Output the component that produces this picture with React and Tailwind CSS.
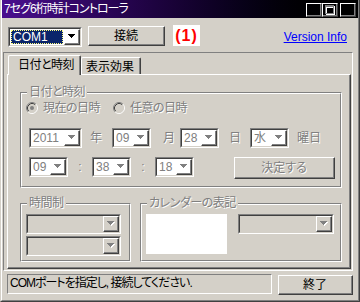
import React from 'react';

const dis = "text-[#808080] [text-shadow:1px_1px_0_#ffffff]";

function Raised({ className = "", children }) {
  return (
    <div className={`shrink-0 border border-t-white border-l-white border-r-[#404040] border-b-[#404040] ${className}`}>
      <div className="w-full h-full border-r border-b border-r-[#808080] border-b-[#808080] flex items-center justify-center">
        {children}
      </div>
    </div>
  );
}

function Arrow({ disabled }) {
  return (
    <svg width="8" height="5" viewBox="0 0 8 5" shapeRendering="crispEdges">
      {disabled && <path d="M1 1h7v1H1zM2 2h5v1H2zM3 3h3v1H3zM4 4h1v1H4z" fill="#ffffff" />}
      <path d="M0 0h7v1H0zM1 1h5v1H1zM2 2h3v1H2zM3 3h1v1H3z" fill={disabled ? "#808080" : "#000000"} />
    </svg>
  );
}

function Combo({ w, value, selected, bg = "bg-white", disabled = true }) {
  return (
    <div className={`${w} h-[20px] shrink-0 border border-t-[#808080] border-l-[#808080] border-r-white border-b-white`}>
      <div className={`h-full flex border border-t-[#404040] border-l-[#404040] border-r-[#d4d0c8] border-b-[#d4d0c8] ${bg}`}>
        <div className="flex-1 min-w-0 flex">
          {selected ? (
            <div className="flex-1 m-[1px] bg-[#0a246a] border border-dotted border-[#ffff80] text-white pl-px leading-[12px]">
              {value}
            </div>
          ) : (
            <span className={`pl-[2px] leading-[16px] ${dis}`}>{value}</span>
          )}
        </div>
        <Raised className="w-[16px] h-full">
          <Arrow disabled={disabled} />
        </Raised>
      </div>
    </div>
  );
}

function Group({ label, className = "", children }) {
  return (
    <div className={`relative shrink-0 border border-t-[#808080] border-l-[#808080] border-r-white border-b-white ${className}`}>
      <div className="w-full h-full border border-t-white border-l-white border-r-[#808080] border-b-[#808080]">
        {children}
      </div>
      <span className={`absolute left-[6px] top-[-8px] px-[2px] bg-[#d4d0c8] leading-[14px] tracking-[-0.5px] ${dis}`}>{label}</span>
    </div>
  );
}

function Radio({ checked }) {
  return (
    <svg width="12" height="12" viewBox="0 0 12 12" className="shrink-0">
      <circle cx="6" cy="6" r="4" fill="#d4d0c8" />
      <path d="M2.11 9.89A5.5 5.5 0 0 1 9.89 2.11" stroke="#808080" fill="none" />
      <path d="M9.89 2.11A5.5 5.5 0 0 1 2.11 9.89" stroke="#ffffff" fill="none" />
      <path d="M2.82 9.18A4.5 4.5 0 0 1 9.18 2.82" stroke="#404040" fill="none" />
      <path d="M9.18 2.82A4.5 4.5 0 0 1 2.82 9.18" stroke="#d4d0c8" fill="none" />
      {checked && <circle cx="6" cy="6" r="2" fill="#808080" />}
    </svg>
  );
}

function TitleBtn({ kind, className = "" }) {
  return (
    <Raised className={`w-[16px] h-[14px] ${className}`}>
      <svg width="13" height="11" viewBox="0 0 13 11" shapeRendering="crispEdges">
        {kind === "min" && <path d="M2 8h6v2H2z" fill="#000000" />}
        {kind === "max" && (
          <>
            <path d="M3 2h9v2H3zM3 4h1v6H3zM11 4h1v6h-1zM3 10h9v1H3z" fill="#ffffff" />
            <path d="M2 1h9v2H2zM2 3h1v6H2zM10 3h1v6h-1zM2 9h9v1H2z" fill="#808080" />
          </>
        )}
        {kind === "close" && (
          <path
            d="M2 1h2v1H2zM8 1h2v1H8zM3 2h2v1H3zM7 2h2v1H7zM4 3h4v1H4zM5 4h2v1H5zM4 5h4v1H4zM3 6h2v1H3zM7 6h2v1H7zM2 7h2v1H2zM8 7h2v1H8z"
            fill="#000000"
          />
        )}
      </svg>
    </Raised>
  );
}

export default function App() {
  return (
    <div className="w-[360px] h-[302px] bg-[#d4d0c8] border-l border-r border-b border-l-[#d4d0c8] border-r-[#404040] border-b-[#404040] text-[12px] leading-[14px] text-black font-['Liberation_Sans','Noto_Sans_CJK_JP',sans-serif] [font-feature-settings:'palt'] overflow-hidden">
      <div className="h-full flex flex-col border-l border-r border-b border-l-white border-r-[#808080] border-b-[#808080]">
        {/* title bar */}
        <div className="h-[18px] shrink-0 flex items-start bg-linear-to-r from-[#4a0f8f] to-black">
          <span className="pl-[2px] pt-[2px] text-white tracking-[-1px]">7セグ6桁時計コントローラ</span>
          <div className="ml-auto mt-[3px] mr-[2px] flex">
            <TitleBtn kind="min" />
            <TitleBtn kind="max" />
            <TitleBtn kind="close" className="ml-[2px]" />
          </div>
        </div>

        {/* port row */}
        <div className="flex items-start mt-[8px] h-[20px] shrink-0">
          <div className="ml-[6px] mt-px">
            <Combo w="w-[74px]" value="COM1" selected disabled={false} />
          </div>
          <Raised className="ml-[6px] w-[77px] h-[20px]">接続</Raised>
          <div className="ml-[8px] -mt-px w-[27px] h-[21px] bg-white flex items-center justify-center text-[16px] font-bold text-[#ff0000] leading-none tracking-[1px]">
            (1)
          </div>
          <a className="ml-auto mr-[11px] mt-[4px] text-[#0000ff] underline">Version Info</a>
        </div>

        {/* tab frame */}
        <div className="ml-px mt-[6px] w-[350px] h-[219px] shrink-0 border border-t-[#808080] border-l-[#808080] border-r-white border-b-white pt-[2px] pl-[3px]">
          <div className="flex items-end h-[19px] pl-px">
            <div className="relative z-10 -mb-px w-[73px] h-[20px] bg-[#d4d0c8] border-t border-l border-r border-t-white border-l-white border-r-[#404040] rounded-t-[2px]">
              <div className="h-full border-r border-r-[#808080] pl-[9px] pt-[2px] tracking-[-0.5px]">日付と時刻</div>
            </div>
            <div className="w-[60px] h-[17px] border-t border-l border-r border-t-white border-l-white border-r-[#404040] rounded-t-[2px]">
              <div className="h-full border-r border-r-[#808080] pl-[4px] pt-[2px]">表示効果</div>
            </div>
          </div>

          <div className="w-[344px] h-[195px] border border-t-white border-l-white border-r-[#404040] border-b-[#404040]">
            <div className="h-full flex flex-col border-r border-b border-r-[#808080] border-b-[#808080]">
              <Group label="日付と時刻" className="ml-[12px] mt-[17px] w-[322px] h-[96px]">
                <div className="flex items-center h-[12px] mt-[8px]">
                  <div className="ml-[4px]"><Radio checked /></div>
                  <span className={`ml-[5px] w-[70px] tracking-[-0.5px] ${dis}`}>現在の日時</span>
                  <Radio />
                  <span className={`ml-[5px] tracking-[-0.5px] ${dis}`}>任意の日時</span>
                </div>
                <div className="flex items-center mt-[14px] ml-[7px]">
                  <Combo w="w-[53px]" value="2011" />
                  <span className={`w-[30px] pl-[8px] ${dis}`}>年</span>
                  <Combo w="w-[39px]" value="09" />
                  <span className={`w-[29px] pl-[12px] ${dis}`}>月</span>
                  <Combo w="w-[39px]" value="28" />
                  <span className={`w-[31px] pl-[10px] ${dis}`}>日</span>
                  <Combo w="w-[39px]" value="水" />
                  <span className={`pl-[8px] ${dis}`}>曜日</span>
                </div>
                <div className="flex items-start mt-[9px] ml-[7px]">
                  <Combo w="w-[39px]" value="09" />
                  <span className={`w-[24px] text-center leading-[20px] ${dis}`}>:</span>
                  <Combo w="w-[39px]" value="38" />
                  <span className={`w-[24px] text-center leading-[20px] ${dis}`}>:</span>
                  <Combo w="w-[39px]" value="18" />
                  <Raised className="ml-[40px] w-[101px] h-[22px]">
                    <span className={dis}>決定する</span>
                  </Raised>
                </div>
              </Group>

              <div className="flex mt-[15px] ml-[12px]">
                <Group label="時間制" className="w-[111px] h-[59px]">
                  <div className="flex flex-col gap-[2px] mt-[9px] ml-[4px]">
                    <Combo w="w-[95px]" value="" bg="bg-[#d4d0c8]" />
                    <Combo w="w-[95px]" value="" bg="bg-[#d4d0c8]" />
                  </div>
                </Group>
                <Group label="カレンダーの表記" className="ml-[9px] w-[202px] h-[59px]">
                  <div className="flex items-start mt-[9px] ml-[4px]">
                    <div className="w-[81px] h-[40px] bg-white" />
                    <div className="ml-[11px]">
                      <Combo w="w-[96px]" value="" bg="bg-[#d4d0c8]" />
                    </div>
                  </div>
                </Group>
              </div>
            </div>
          </div>
        </div>

        {/* status row */}
        <div className="flex items-start mt-[3px]">
          <div className="ml-[5px] w-[265px] h-[20px] border border-t-[#808080] border-l-[#808080] border-r-white border-b-white pl-[2px] pt-px whitespace-nowrap overflow-hidden tracking-[-1px]">
            COMポートを指定し, 接続してください.
          </div>
          <Raised className="ml-[6px] mt-px w-[75px] h-[20px]">終了</Raised>
        </div>
      </div>
    </div>
  );
}
